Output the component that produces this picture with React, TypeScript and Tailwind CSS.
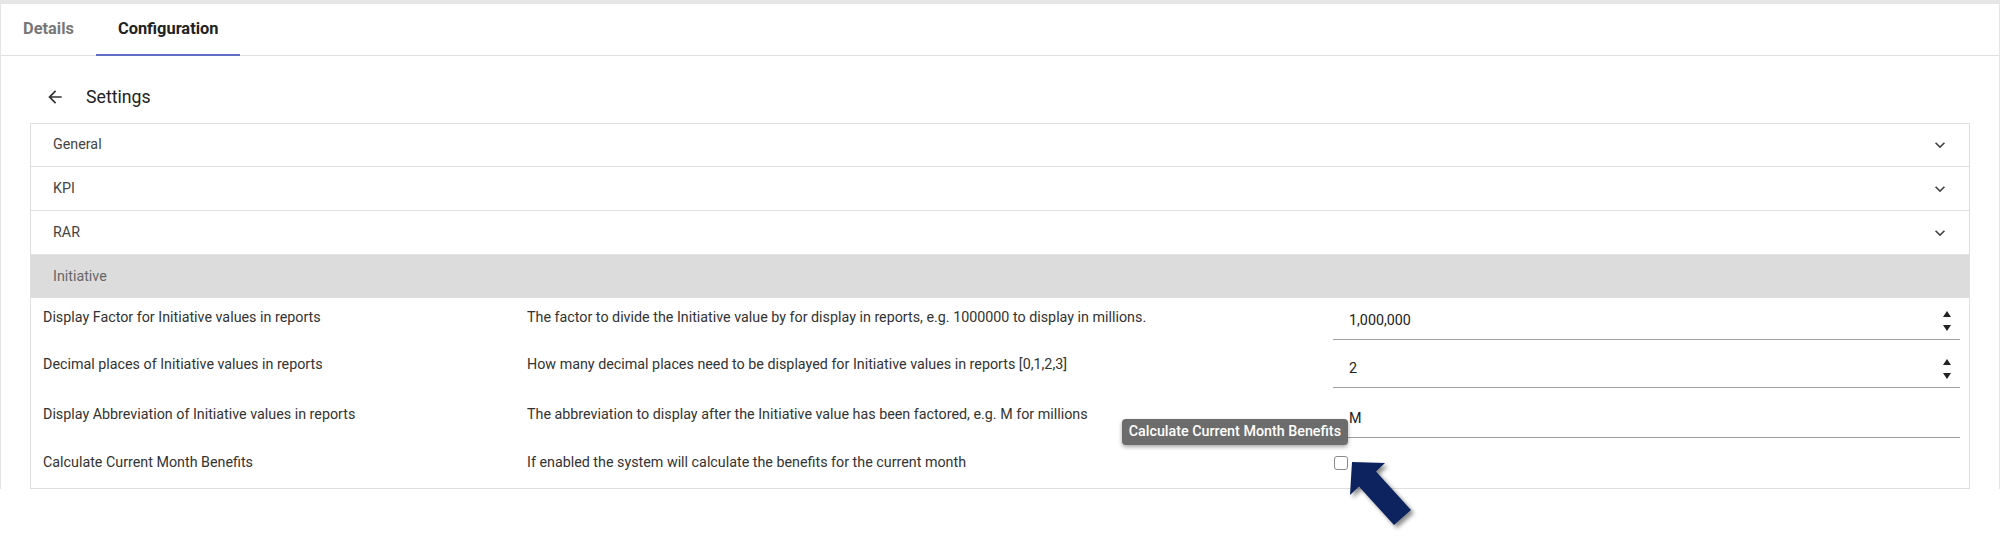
import { useState } from "react";

const sections = ["General", "KPI", "RAR"];

const settings = [
  {
    label: "Display Factor for Initiative values in reports",
    description:
      "The factor to divide the Initiative value by for display in reports, e.g. 1000000 to display in millions.",
    value: "1,000,000",
    spinner: true,
    row: "h-[49px] pt-[9px]",
    input: "-mt-[4px]",
  },
  {
    label: "Decimal places of Initiative values in reports",
    description:
      "How many decimal places need to be displayed for Initiative values in reports [0,1,2,3]",
    value: "2",
    spinner: true,
    row: "h-[50px] pt-[7px]",
    input: "-mt-[3px]",
  },
  {
    label: "Display Abbreviation of Initiative values in reports",
    description:
      "The abbreviation to display after the Initiative value has been factored, e.g. M for millions",
    value: "M",
    spinner: false,
    row: "h-[49px] pt-[7px]",
    input: "-mt-[3px]",
  },
];

function Chevron() {
  return (
    <svg width="20" height="20" viewBox="0 0 24 24" fill="#444">
      <path d="M16.59 8.59 12 13.17 7.41 8.59 6 10l6 6 6-6z" />
    </svg>
  );
}

function Spinner() {
  return (
    <div className="absolute right-[9px] top-[8px] flex flex-col gap-[8px]">
      <svg width="8" height="6" viewBox="0 0 8 6">
        <path d="M4 0 8 6H0z" fill="#222" />
      </svg>
      <svg width="8" height="6" viewBox="0 0 8 6">
        <path d="M0 0h8L4 6z" fill="#222" />
      </svg>
    </div>
  );
}

export default function App() {
  const [tab, setTab] = useState("configuration");
  const [checked, setChecked] = useState(false);

  return (
    <div className="w-[2000px] h-[538px] bg-white font-['Roboto',sans-serif] text-[#333]">
      <div className="h-[489px] border-t-4 border-t-[#e6e6e6] border-x border-x-[#e4e4e4] flex flex-col">
        {/* tabs */}
        <div className="flex h-[52px] border-b border-[#e0e0e0]">
          <button
            onClick={() => setTab("details")}
            className={`relative px-[22px] text-[16.4px] font-bold ${
              tab === "details" ? "text-[#222]" : "text-[#777]"
            }`}
          >
            Details
            {tab === "details" && (
              <span className="absolute left-0 right-0 bottom-[-1px] h-[2px] bg-[#5f6cc4]" />
            )}
          </button>
          <button
            onClick={() => setTab("configuration")}
            className={`relative px-[22px] text-[16.4px] font-bold ${
              tab === "configuration" ? "text-[#222]" : "text-[#777]"
            }`}
          >
            Configuration
            {tab === "configuration" && (
              <span className="absolute left-0 right-0 bottom-[-1px] h-[2px] bg-[#5f6cc4]" />
            )}
          </button>
        </div>

        <div className="px-[29px]">
          {/* header */}
          <div className="flex items-center h-[26px] mt-[28px] mb-[13px]">
            <svg className="ml-[15px]" width="20" height="20" viewBox="0 0 24 24" fill="#333">
              <path d="M20 11H7.83l5.59-5.59L12 4l-8 8 8 8 1.41-1.41L7.83 13H20v-2z" />
            </svg>
            <span className="ml-[21px] text-[17.7px] text-[#222]">Settings</span>
          </div>

          {/* accordion */}
          <div className="border border-[#dedede] text-[14.3px]">
            {sections.map((s, i) => (
              <div
                key={s}
                className={`flex items-center justify-between pl-[22px] pr-[19px] border-b border-[#e2e2e2] text-[#444] ${
                  i === 0 ? "h-[43px]" : "h-[44px]"
                }`}
              >
                <span>{s}</span>
                <Chevron />
              </div>
            ))}
            <div className="flex items-center h-[43px] pl-[22px] bg-[#dcdcdc] text-[#666]">
              Initiative
            </div>

            {settings.map((row) => (
              <div key={row.label} className={`flex items-start ${row.row}`}>
                <div className="w-[496px] pl-[12px] leading-5">{row.label}</div>
                <div className="w-[806px] leading-5">{row.description}</div>
                <div className="flex-1 pr-[9px]">
                  <div
                    className={`relative h-[37px] border-b border-[#a0a0a0] flex items-center pl-[16px] text-[#222] ${row.input}`}
                  >
                    {row.value}
                    {row.spinner && <Spinner />}
                  </div>
                </div>
              </div>
            ))}

            <div className="flex items-start pt-[6px] h-[42px]">
              <div className="w-[496px] pl-[12px] leading-5">Calculate Current Month Benefits</div>
              <div className="w-[806px] leading-5">
                If enabled the system will calculate the benefits for the current month
              </div>
              <div className="flex-1">
                <div className="relative ml-[1px] mt-[4px] w-[14px] h-[14px]">
                  <button
                    onClick={() => setChecked(!checked)}
                    className={`block w-[14px] h-[14px] rounded-[3px] border border-[#8a8a8a] ${
                      checked ? "bg-[#5f6cc4]" : "bg-white"
                    }`}
                  />
                  {/* tooltip */}
                  <div className="absolute right-0 bottom-[25px] h-[26px] px-[7px] flex items-center whitespace-nowrap rounded-[4px] bg-[#6c6c6c] text-white text-[14.3px] font-medium shadow-[0_2px_4px_rgba(0,0,0,0.35)]">
                    Calculate Current Month Benefits
                  </div>
                  {/* callout arrow */}
                  <svg
                    className="absolute left-[10px] top-0 drop-shadow-[3px_3px_2px_rgba(0,0,0,0.45)]"
                    width="80"
                    height="80"
                    viewBox="0 0 80 80"
                  >
                    <polygon
                      points="8,6 41,7 32,15.5 67,54 50,69 15,30.5 6,39"
                      fill="#0c235f"
                    />
                  </svg>
                </div>
              </div>
            </div>
          </div>
        </div>
      </div>
    </div>
  );
}
